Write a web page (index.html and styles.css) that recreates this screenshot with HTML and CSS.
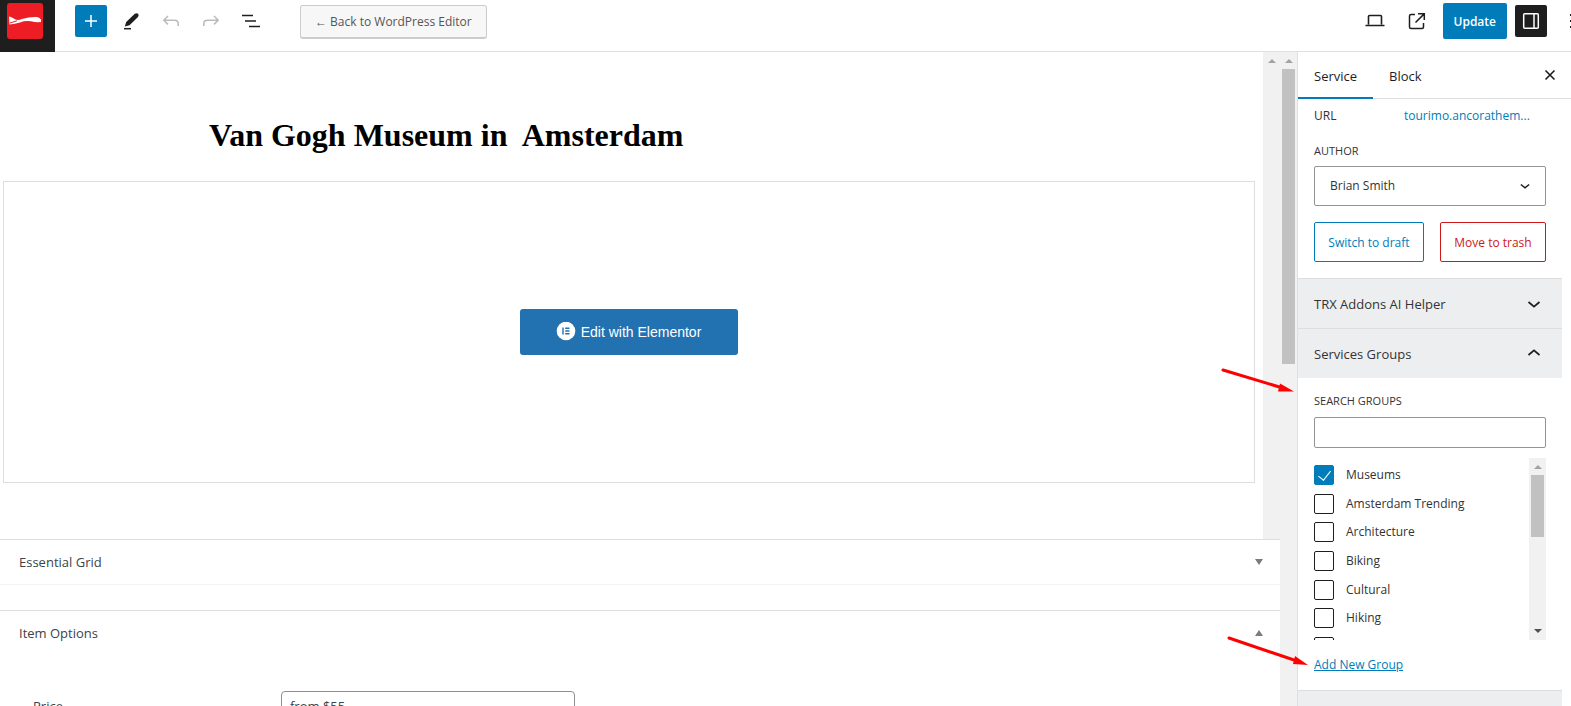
FILE: index.html
```html
<!DOCTYPE html>
<html lang="en">
<head>
    <meta charset="UTF-8">
    <meta name="viewport" content="width=device-width, initial-scale=1.0">
    <title>Edit Service</title>
    <link rel="stylesheet" href="styles.css">
</head>
<body>

    <header class="topbar">
        <a href="#" class="site-logo" aria-label="View Services">
            <svg width="36" height="36" viewBox="0 0 36 36">
                <rect width="36" height="36" rx="3" fill="#ee1c25"/>
                <path d="M2 13.500L4 14L8.500 16.500Q11 17.500 15 16Q23 13.500 30 14Q33 14.500 34 16.500L34 19Q29 19.500 24 18.300Q18 17.500 13 19.500Q8 21 2.500 21.500Z" fill="#fff"/>
                <path d="M3 20L10 17.800" stroke="#ee1c25" stroke-width="1"/>
            </svg>
        </a>
        <div class="tools">
            <button class="icon-btn primary" aria-label="Add block">
                <svg width="24" height="24" viewBox="0 0 24 24"><path d="M12 6v12M6 12h12" stroke="#fff" stroke-width="1.500"/></svg>
            </button>
            <button class="icon-btn" aria-label="Tools">
                <svg width="24" height="24" viewBox="0 0 24 24"><path d="M19 4.800c-.9-.9-2.300-.9-3.200 0L7.200 13l-1.400 4.600 4.700-1.400 8.500-8.300c.9-.9.800-2.300 0-3.100z" fill="#1e1e1e"/><path d="M5 19.700h7" stroke="#1e1e1e" stroke-width="1.500"/></svg>
            </button>
            <button class="icon-btn" aria-label="Undo" disabled>
                <svg width="24" height="24" viewBox="0 0 24 24"><path d="M9 7 4.800 11.200 9 15.400M5 11.200h10.500c2.200 0 3.700 1.200 3.700 3.400v2.400" fill="none" stroke="#bbb" stroke-width="1.500"/></svg>
            </button>
            <button class="icon-btn" aria-label="Redo" disabled>
                <svg width="24" height="24" viewBox="0 0 24 24"><path d="M15 7l4.200 4.200-4.200 4.200M19 11.200H8.500c-2.200 0-3.700 1.200-3.700 3.400v2.400" fill="none" stroke="#bbb" stroke-width="1.500"/></svg>
            </button>
            <button class="icon-btn" aria-label="Document Overview">
                <svg width="24" height="24" viewBox="0 0 24 24"><path d="M3 6.500h11M6 12h11M10 17.500h11" stroke="#1e1e1e" stroke-width="1.500"/></svg>
            </button>
        </div>
        <button class="back-btn">← Back to WordPress Editor</button>
        <div class="actions">
            <button class="icon-btn" aria-label="View">
                <svg width="24" height="24" viewBox="0 0 24 24"><path d="M5.500 15.500v-8q0-1 1-1h11q1 0 1 1v8M2.500 16.500h19" fill="none" stroke="#1e1e1e" stroke-width="1.600"/></svg>
            </button>
            <button class="icon-btn" aria-label="View Service">
                <svg width="24" height="24" viewBox="0 0 24 24"><path d="M10 5.500H6q-1.500 0-1.500 1.500v11q0 1.500 1.500 1.500h11q1.500 0 1.500-1.500v-4M13 4.800h6.300V11M19.200 4.900 10.500 13.500" fill="none" stroke="#1e1e1e" stroke-width="1.500"/></svg>
            </button>
            <button class="update-btn">Update</button>
            <button class="icon-btn dark" aria-label="Settings">
                <svg width="24" height="24" viewBox="0 0 24 24"><rect x="4.700" y="4.700" width="14.600" height="14.600" rx="1" fill="none" stroke="#fff" stroke-width="1.500"/><path d="M15 5v14" stroke="#fff" stroke-width="1.500"/></svg>
            </button>
            <button class="icon-btn options" aria-label="Options">
                <svg width="24" height="24" viewBox="0 0 24 24"><path d="M11 5h2v2h-2zM11 11h2v2h-2zM11 17h2v2h-2z" fill="#1e1e1e"/></svg>
            </button>
        </div>
    </header>

    <div class="editor">
        <main class="content">
            <div class="canvas">
                <div class="page">
                    <h1>Van Gogh Museum in&nbsp; Amsterdam</h1>
                    <div class="elementor">
                        <button class="elementor-btn">
                            <svg width="20" height="20" viewBox="0 0 20 20"><circle cx="10" cy="9" r="9.300" fill="#fff"/><path d="M7 5.500v7M9.200 6.200h4.300M9.200 9h4.300M9.200 11.800h4.300" stroke="#2271b1" stroke-width="1.400"/></svg>
                            Edit with Elementor
                        </button>
                    </div>
                </div>
                <div class="scrollbar"><span class="arrow-up"></span></div>
            </div>

            <section class="metabox closed">
                <h2>Essential Grid <span class="toggle down"></span></h2>
            </section>
            <section class="metabox">
                <h2>Item Options <span class="toggle up"></span></h2>
                <div class="field">
                    <label for="price">Price</label>
                    <input type="text" id="price" value="from $55">
                </div>
            </section>
        </main>
        <div class="scrollbar">
            <span class="arrow-up"></span>
            <span class="thumb"></span>
        </div>

        <aside class="sidebar">
            <div class="tabs">
                <button class="tab active">Service</button>
                <button class="tab">Block</button>
                <button class="close" aria-label="Close Settings">
                    <svg width="24" height="24" viewBox="0 0 24 24"><path d="M7.500 7.500l9 9M16.500 7.500l-9 9" stroke="#1e1e1e" stroke-width="1.600"/></svg>
                </button>
            </div>
            <div class="panels">
                <div class="panel summary">
                    <div class="row">
                        <span>URL</span>
                        <a href="#">tourimo.ancorathem...</a>
                    </div>
                    <label class="caption" for="author">Author</label>
                    <div class="select">
                        <select id="author">
                            <option>Brian Smith</option>
                        </select>
                        <svg width="18" height="18" viewBox="0 0 24 24"><path d="M6.500 10l5.500 4.500 5.500-4.500" fill="none" stroke="#1e1e1e" stroke-width="2"/></svg>
                    </div>
                    <div class="buttons">
                        <button class="draft">Switch to draft</button>
                        <button class="trash">Move to trash</button>
                    </div>
                </div>
                <button class="panel-title">
                    TRX Addons AI Helper
                    <svg width="24" height="24" viewBox="0 0 24 24"><path d="M6.500 10l5.500 4.600 5.500-4.600" fill="none" stroke="#1e1e1e" stroke-width="1.700"/></svg>
                </button>
                <button class="panel-title">
                    Services Groups
                    <svg width="24" height="24" viewBox="0 0 24 24"><path d="M6.500 13l5.500-4.600 5.500 4.600" fill="none" stroke="#1e1e1e" stroke-width="1.700"/></svg>
                </button>
                <div class="panel groups">
                    <label class="caption" for="search">Search Groups</label>
                    <input type="text" id="search" class="search">
                    <div class="group-list">
                        <div class="items">
                            <label><input type="checkbox" checked> Museums</label>
                            <label><input type="checkbox"> Amsterdam Trending</label>
                            <label><input type="checkbox"> Architecture</label>
                            <label><input type="checkbox"> Biking</label>
                            <label><input type="checkbox"> Cultural</label>
                            <label><input type="checkbox"> Hiking</label>
                            <label><input type="checkbox" aria-label="Next group"></label>
                        </div>
                        <div class="scrollbar small">
                            <span class="arrow-up"></span>
                            <span class="thumb"></span>
                            <span class="arrow-down"></span>
                        </div>
                    </div>
                    <a href="#" class="add-new">Add New Group</a>
                </div>
                <div class="panel-title"></div>
            </div>
        </aside>
    </div>

    <!-- pointers to the groups panel -->
    <svg class="pointer first" width="76" height="30" viewBox="0 0 76 30">
        <path d="M4 4L62 21.500" stroke="#f00" stroke-width="3" stroke-linecap="round"/>
        <path d="M61 17.500L75 25.500L59 25.500Z" fill="#f00"/>
    </svg>
    <svg class="pointer second" width="82" height="34" viewBox="0 0 82 34">
        <path d="M3 4L68 26" stroke="#f00" stroke-width="3" stroke-linecap="round"/>
        <path d="M69 22L82 31L67 30Z" fill="#f00"/>
    </svg>

</body>
</html>
```
FILE: styles.css
```css
* {
    box-sizing: border-box;
}
body {
    margin: 0;
    height: 100vh;
    overflow: hidden;
    display: flex;
    flex-direction: column;
    position: relative;
    background: #fff;
    color: #333;
    font-family: "Open Sans", "Noto Sans", sans-serif;
    font-size: 12px;
    line-height: 20px;
}
button, input, select {
    font: inherit;
    color: inherit;
}
button {
    border: none;
    background: none;
    padding: 0;
    cursor: pointer;
}
a {
    color: #007cba;
}
svg {
    display: block;
    flex: none;
}

/* top bar */
.topbar {
    height: 52px;
    flex: none;
    display: flex;
    align-items: flex-start;
    border-bottom: 1px solid #e0e0e0;
}
.site-logo {
    width: 55px;
    height: 52px;
    padding: 3px 7px;
    background: #1e1e1e;
}
.tools {
    display: flex;
    gap: 8px;
    padding: 5px 0 0 20px;
}
.icon-btn {
    width: 32px;
    height: 32px;
    flex: none;
    display: flex;
    align-items: center;
    justify-content: center;
    border-radius: 2px;
}
.icon-btn.primary {
    background: #007cba;
}
.icon-btn.dark {
    background: #1e1e1e;
}
.back-btn {
    height: 34px;
    margin: 5px 0 0 33px;
    padding: 1px 14px 0;
    border: 1px solid #ccc;
    border-bottom-width: 2px;
    border-radius: 3px;
    background: #f7f7f7;
    color: #555;
}
.actions {
    display: flex;
    align-items: center;
    gap: 8px;
    margin: 3px -16px 0 auto;
}
.actions .icon-btn:first-child {
    margin-right: 2px;
}
.update-btn {
    height: 36px;
    padding: 1px 11px 0;
    margin-left: 2px;
    border-radius: 2px;
    background: #007cba;
    color: #fff;
    font-weight: 600;
}

/* editor area */
.editor {
    flex: 1;
    min-height: 0;
    display: flex;
}
.content {
    flex: 1;
    min-width: 0;
    overflow: hidden;
}
.canvas {
    display: flex;
}
.page {
    flex: 1;
    padding: 63px 8px 56px 3px;
}
h1 {
    max-width: 840px;
    margin: 0 auto 26px;
    color: #000;
    font: bold 32px/40px "Liberation Serif", serif;
}
.elementor {
    height: 302px;
    display: flex;
    align-items: center;
    justify-content: center;
    border: 1px solid #ddd;
}
.elementor-btn {
    height: 46px;
    padding: 0 37px 0 36px;
    display: flex;
    align-items: center;
    gap: 5px;
    border-radius: 3px;
    background: #2271b1;
    color: #fff;
    font: 14px/20px "Liberation Sans", sans-serif;
}

/* scrollbars */
.scrollbar {
    width: 17px;
    flex: none;
    display: flex;
    flex-direction: column;
    align-items: center;
    background: #f1f1f1;
}
.arrow-up {
    margin: 7px 0 6px;
    border: 4px solid transparent;
    border-top: none;
    border-bottom-color: #a3a3a3;
}
.arrow-down {
    margin: auto 0 7px;
    border: 4px solid transparent;
    border-bottom: none;
    border-top-color: #505050;
}
.thumb {
    width: 13px;
    height: 295px;
    background: #c1c1c1;
}
.small .thumb {
    height: 62px;
}

/* meta boxes */
.metabox {
    border-top: 1px solid #ddd;
}
.metabox h2 {
    margin: 0;
    padding: 12px 17px 12px 19px;
    display: flex;
    align-items: center;
    justify-content: space-between;
    color: #3c434a;
    font-size: 13px;
    font-weight: 500;
}
.metabox.closed {
    padding-bottom: 25px;
}
.metabox.closed h2 {
    border-bottom: 1px solid #f3f4f5;
}
.toggle {
    border: 4px solid transparent;
}
.toggle.down {
    border-top: 6px solid #787c82;
    border-bottom: none;
}
.toggle.up {
    border-bottom: 6px solid #787c82;
    border-top: none;
}
.field {
    display: grid;
    grid-template-columns: 248px 294px;
    align-items: center;
    padding: 36px 33px;
    color: #3c434a;
    font-size: 13px;
}
.field input {
    height: 30px;
    padding: 0 8px;
    border: 1px solid #8c8f94;
    border-radius: 4px;
}

/* settings sidebar */
.sidebar {
    width: 274px;
    flex: none;
    display: flex;
    flex-direction: column;
    border-left: 1px solid #e0e0e0;
}
.tabs {
    height: 47px;
    flex: none;
    display: flex;
    border-bottom: 1px solid #ddd;
}
.tab {
    height: 47px;
    padding: 3px 16px 0;
    border-bottom: 2px solid transparent;
    color: #1e1e1e;
    font-size: 13px;
}
.tab.active {
    border-bottom-color: #007cba;
}
.close {
    margin: 0 9px 0 auto;
}
.panels {
    flex: 1;
    min-height: 0;
    overflow: hidden;
    margin-right: 9px;
}
.panel {
    padding: 0 16px;
}
.summary {
    padding-top: 7px;
    padding-bottom: 16px;
}
.row {
    display: grid;
    grid-template-columns: 90px 1fr;
}
.row a {
    text-decoration: none;
    white-space: nowrap;
}
.caption {
    display: block;
    font-size: 11px;
    text-transform: uppercase;
}
.summary .caption {
    margin: 15px 0 5px;
}
.select {
    position: relative;
}
.select select {
    width: 100%;
    height: 40px;
    padding: 0 15px;
    appearance: none;
    border: 1px solid #949494;
    border-radius: 2px;
    background: #fff;
}
.select svg {
    position: absolute;
    top: 11px;
    right: 12px;
    pointer-events: none;
}
.buttons {
    display: flex;
    gap: 16px;
    margin-top: 16px;
}
.buttons button {
    flex: auto;
    height: 40px;
    padding-top: 2px;
    border: 1px solid;
    border-radius: 2px;
    white-space: nowrap;
}
.buttons .draft {
    color: #007cba;
}
.buttons .trash {
    color: #cc1818;
}
.panel-title {
    width: 100%;
    height: 50px;
    padding: 0 16px;
    display: flex;
    align-items: center;
    justify-content: space-between;
    border-top: 1px solid #ddd;
    background: #edeef0;
    font-size: 13px;
    text-align: left;
}
.groups {
    padding-top: 13px;
    padding-bottom: 15px;
}
.search {
    display: block;
    width: 100%;
    height: 31px;
    margin: 6px 0 10px;
    border: 1px solid #949494;
    border-radius: 2px;
}
.group-list {
    height: 182px;
    display: flex;
    justify-content: space-between;
    overflow: hidden;
}
.items {
    height: 199px;
    padding-top: 7px;
    display: flex;
    flex-direction: column;
    justify-content: space-between;
}
.items label {
    height: 20px;
    display: flex;
    align-items: center;
    gap: 12px;
}
.items input {
    width: 20px;
    height: 20px;
    margin: 0;
    display: grid;
    place-items: center;
    appearance: none;
    border: 1px solid #1e1e1e;
    border-radius: 2px;
}
.items input:checked {
    border-color: #007cba;
    background: #007cba;
}
.items input:checked::before {
    content: "";
    width: 6px;
    height: 11px;
    margin-bottom: 3px;
    border: solid #fff;
    border-width: 0 1px 1px 0;
    transform: rotate(38deg);
}
.add-new {
    display: block;
    width: fit-content;
    margin-top: 15px;
}

/* red pointers over the page */
.pointer {
    position: absolute;
}
.pointer.first {
    top: 366px;
    right: 276px;
}
.pointer.second {
    top: 634px;
    right: 263px;
}
```
